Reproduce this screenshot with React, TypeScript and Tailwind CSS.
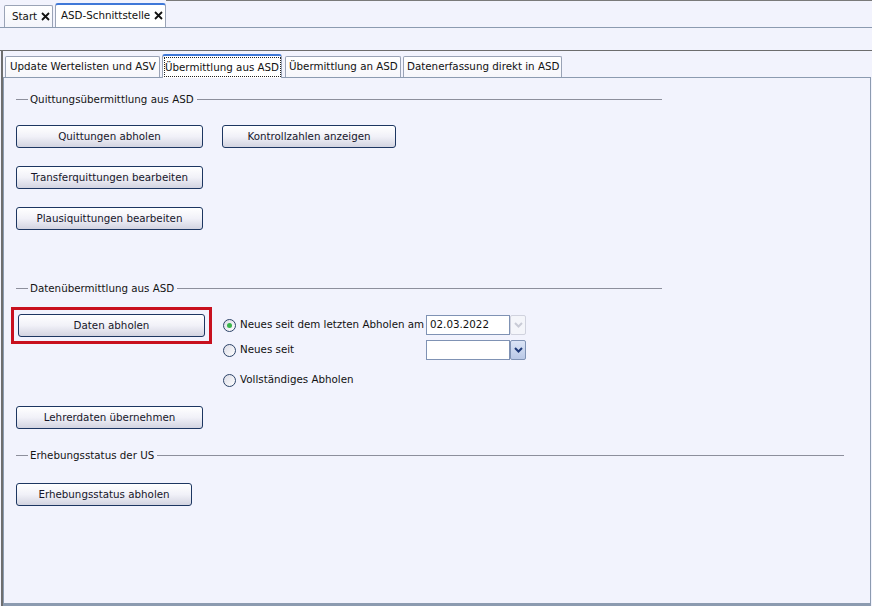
import React from "react";

function CloseX() {
  return (
    <svg width="9" height="9" viewBox="0 0 9 9" className="ml-[4px] mt-[-1px] shrink-0">
      <path d="M1 1 L8 8 M8 1 L1 8" stroke="#111" strokeWidth="1.8" />
    </svg>
  );
}

function Btn({ w, children }: { w: string; children: React.ReactNode }) {
  return (
    <div
      className={`${w} h-[23px] rounded-[3px] border border-[#1d3661] bg-gradient-to-b from-[#ffffff] via-[#f1f1f8] to-[#d3d4e1] flex items-center justify-center text-[#16162a] shadow-[inset_0_1px_0_#ffffff]`}
    >
      {children}
    </div>
  );
}

function Header({ w, children }: { w: string; children: React.ReactNode }) {
  return (
    <div className={`${w} h-[14px] flex items-center`}>
      <div className="w-[12px] h-px bg-[#8d8f9c]" />
      <span className="pl-[2px] pr-[3px] leading-[14px] text-[#141414]">{children}</span>
      <div className="flex-1 h-px bg-[#8d8f9c]" />
    </div>
  );
}

function Radio({ checked }: { checked?: boolean }) {
  return (
    <div className="w-[13px] h-[13px] rounded-full border border-[#2c4368] bg-gradient-to-br from-[#dcdce6] to-[#ffffff] flex items-center justify-center shrink-0">
      {checked && <div className="w-[5px] h-[5px] rounded-full bg-[#39b54a]" />}
    </div>
  );
}

function Chevron({ color }: { color: string }) {
  return (
    <svg width="9" height="6" viewBox="0 0 9 6">
      <path d="M1 1 L4.5 4.5 L8 1" stroke={color} strokeWidth="2" fill="none" />
    </svg>
  );
}

export default function App() {
  return (
    <div className="w-[872px] h-[606px] overflow-hidden bg-[#f2f3fd] flex flex-col text-[10.3px] text-[#111] whitespace-nowrap font-['DejaVu_Sans',Verdana,sans-serif]">
      {/* Top tab strip */}
      <div className="h-[28px] flex items-end border-b border-[#8c9bb0] pl-[4px]">
        <div className="w-[49px] h-[22px] mr-[2px] border border-b-0 border-[#9aa3b6] rounded-t-[2px] bg-gradient-to-b from-[#ffffff] to-[#f4f5fb] flex items-center pl-[7px] text-[#111]">
          Start
          <CloseX />
        </div>
        <div className="w-[111px] h-[24px] border border-b-0 border-[#9aa3b6] border-t-2 border-t-[#3f78d8] rounded-t-[3px] bg-white flex items-center pl-[5px] text-[#111]">
          ASD-Schnittstelle
          <CloseX />
        </div>
        <div className="flex-1 self-stretch border-t border-[#7a7a7a]" />
      </div>
      {/* Band */}
      <div className="h-[23px] border-b border-[#6d6d6d]" />
      {/* Main */}
      <div className="flex-1 flex flex-col ml-[1px] mr-[1px] border-l-2 border-[#6e6e6e]">
        <div className="h-[26px] flex items-end pl-[2px]">
          <div className="h-[21px] border border-b-0 border-[#9aa3b6] rounded-t-[2px] bg-gradient-to-b from-[#ffffff] to-[#f6f6fb] px-[4px] flex items-center mr-[2px] w-[155px]">
            Update Wertelisten und ASV
          </div>
          <div className="h-[24px] w-[120px] border border-b-0 border-[#9aa3b6] border-t-2 border-t-[#3f78d8] rounded-t-[3px] bg-white flex items-center justify-center mr-[3px] translate-y-[1px]">
            <span className="border border-dotted border-[#222] leading-[18px] h-[20px] w-[117px] text-center">
              Übermittlung aus ASD
            </span>
          </div>
          <div className="h-[21px] border border-b-0 border-[#9aa3b6] rounded-t-[2px] bg-gradient-to-b from-[#ffffff] to-[#f6f6fb] px-[3px] flex items-center mr-[2px] w-[116px]">
            Übermittlung an ASD
          </div>
          <div className="h-[21px] border border-b-0 border-[#9aa3b6] rounded-t-[2px] bg-gradient-to-b from-[#ffffff] to-[#f6f6fb] px-[3px] flex items-center w-[159px]">
            Datenerfassung direkt in ASD
          </div>
        </div>
        {/* Panel */}
        <div className="flex-1 border border-[#8c9bb0] border-b-[3px] bg-[#f2f3fd] pl-[12px] flex flex-col">
          <div className="mt-[14px]">
            <Header w="w-[646px]">Quittungsübermittlung aus ASD</Header>
          </div>
          <div className="mt-[19px] flex gap-[19px]">
            <Btn w="w-[187px]">Quittungen abholen</Btn>
            <Btn w="w-[174px]">Kontrollzahlen anzeigen</Btn>
          </div>
          <div className="mt-[18px]">
            <Btn w="w-[187px]">Transferquittungen bearbeiten</Btn>
          </div>
          <div className="mt-[18px]">
            <Btn w="w-[187px]">Plausiquittungen bearbeiten</Btn>
          </div>
          <div className="mt-[51px]">
            <Header w="w-[646px]">Datenübermittlung aus ASD</Header>
          </div>
          <div className="mt-[12px] flex items-start">
            <div className="-ml-[5px] border-[3px] border-[#c8101e] p-[4px]">
              <Btn w="w-[187px]">Daten abholen</Btn>
            </div>
            <div className="ml-[11px] mt-[8px] flex flex-col">
              <div className="h-[20px] flex items-center">
                <div className="w-[203px] flex items-center gap-[4px]">
                  <Radio checked />
                  <span>Neues seit dem letzten Abholen am</span>
                </div>
                <div className="flex h-[20px]">
                  <div className="w-[84px] h-[20px] border border-[#7f92b4] bg-white pl-[3px] flex items-center">02.03.2022</div>
                  <div className="w-[16px] h-[20px] border border-[#d0d2de] rounded-[2px] bg-[#f4f5fa] flex items-center justify-center">
                    <Chevron color="#c9cbd6" />
                  </div>
                </div>
              </div>
              <div className="h-[20px] mt-[5px] flex items-center">
                <div className="w-[203px] flex items-center gap-[4px]">
                  <Radio />
                  <span>Neues seit</span>
                </div>
                <div className="flex h-[20px]">
                  <div className="w-[84px] h-[20px] border border-[#7f92b4] bg-white" />
                  <div className="w-[16px] h-[20px] border border-[#7f92b4] rounded-[2px] bg-gradient-to-b from-[#dbe4f6] to-[#b9c8e6] flex items-center justify-center">
                    <Chevron color="#1f3a78" />
                  </div>
                </div>
              </div>
              <div className="h-[20px] mt-[10px] flex items-center gap-[4px]">
                <Radio />
                <span>Vollständiges Abholen</span>
              </div>
            </div>
          </div>
          <div className="mt-[16px]">
            <Btn w="w-[187px]">Lehrerdaten übernehmen</Btn>
          </div>
          <div className="mt-[19px]">
            <Header w="w-[828px]">Erhebungsstatus der US</Header>
          </div>
          <div className="mt-[21px]">
            <Btn w="w-[176px]">Erhebungsstatus abholen</Btn>
          </div>
        </div>
      </div>
    </div>
  );
}
